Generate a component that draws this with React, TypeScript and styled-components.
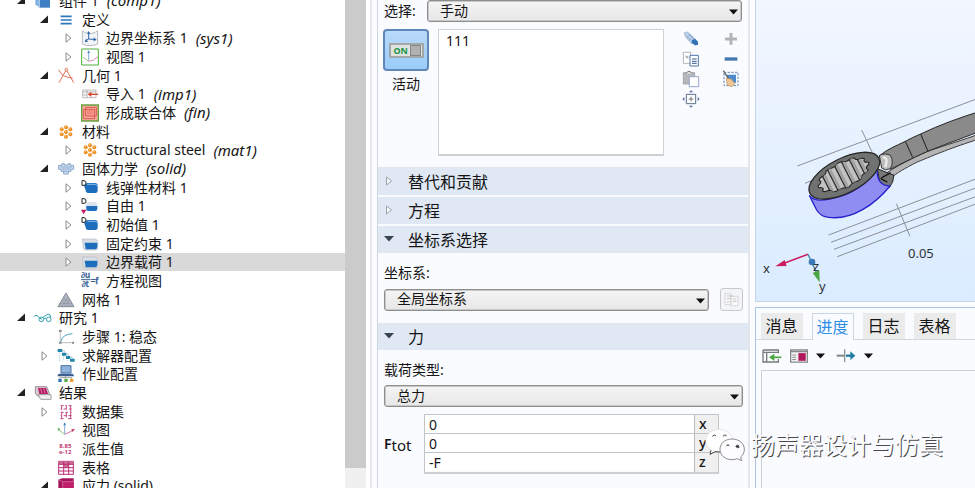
import React from "react";
import styled, { createGlobalStyle, css } from "styled-components";

const GlobalStyle = createGlobalStyle`
  * { box-sizing: border-box; }
  html, body { margin: 0; padding: 0; }
  body {
    font-family: "Noto Sans", "Noto Sans CJK SC", sans-serif;
    font-size: 14px;
    color: #151515;
    background: #fcfcff;
    overflow: hidden;
  }
  button, input, select, textarea { font: inherit; color: inherit; margin: 0; }
`;

const Workspace = styled.div`
  position: relative;
  display: grid;
  grid-template-columns: 370fr 385fr 220fr;
  height: 100vh;
  overflow: hidden;
`;

/* ---------- model tree ---------- */

const TreePane = styled.nav`
  display: flex;
  min-width: 0;
  overflow: hidden;
  background: #fff;
`;

const TreeList = styled.ul`
  flex: 1;
  min-width: 0;
  list-style: none;
  margin: -9px 0 0;
  padding: 0;
`;

const TreeRow = styled.li<{ $level: number; $selected?: boolean }>`
  display: flex;
  align-items: center;
  height: 19px;
  padding-left: ${(p) => [16, 39, 63][p.$level]}px;
  background: ${(p) => (p.$selected ? "#d9d9d9" : "transparent")};
  white-space: nowrap;
  line-height: 18px;
  &:nth-child(3n) { height: 18px; }
`;

const Expander = styled.button`
  display: flex;
  width: 10px;
  height: 12px;
  margin-right: 8px;
  padding: 0;
  border: 0;
  background: none;
`;

const NodeIcon = styled.svg`
  flex: none;
  width: 18px;
  height: 18px;
  margin-right: 7px;
`;

const Tag = styled.i`
  margin-left: 8px;
  font-size: 15px;
  line-height: 16px;
  padding-bottom: 1px;
`;

const ScrollTrack = styled.div`
  width: 21px;
  margin-right: 4px;
  background: #f0f0f0;
`;

const ScrollThumb = styled.div`
  height: 96%;
  background: #cbcbcb;
`;

type IconName =
  | "component" | "lines" | "coords" | "view" | "geometry" | "import" | "union"
  | "material" | "solid" | "domainD" | "free" | "boundary" | "equation" | "mesh"
  | "study" | "step" | "solver" | "job" | "results" | "dataset" | "axes"
  | "derived" | "table" | "stress";

const dots = [[27, 13], [14, 19], [40, 19], [27, 27], [14, 34], [40, 34], [27, 41]];

const icons: Record<IconName, React.ReactNode> = {
  component: (
    <>
      <path d="M4 12l10-6h34v38H14L4 38z" fill="#7fb2e3" />
      <path d="M15 13h33v34H15z" fill="#3f7fc4" />
      <path d="M16 13v34" stroke="#b9d6f0" strokeWidth="3" />
    </>
  ),
  lines: <path d="M11 16h33M11 27h33M11 38h33" stroke="#2f78be" strokeWidth="5" />,
  coords: (
    <>
      <path d="M4 6q4 0 7 5 16 6 31 0 3-5 8-5v39q-23 10-46 0z" fill="#f1f3f6" stroke="#b4b8be" strokeWidth="3" />
      <path d="M23 10v20l-9 5M23 30l21 2" fill="none" stroke="#2e67a8" strokeWidth="3" />
      <path d="M18 14l5-8 5 8zM38 25l9 7-9 5zM15 29l-4 10 10-1z" fill="#2e67a8" />
    </>
  ),
  view: (
    <>
      <path d="M2 3h50v48H2z" fill="#fff" stroke="#50ae3c" strokeWidth="3" />
      <path d="M23 38V10" stroke="#4b83c0" strokeWidth="2" />
      <path d="M19 15l4-8 4 8z" fill="#4b83c0" />
      <path d="M23 40L6 27" stroke="#5fae4f" strokeWidth="2" />
      <path d="M23 40q14 0 28-14" fill="none" stroke="#d0568f" strokeWidth="2" />
    </>
  ),
  geometry: (
    <g fill="none" stroke="#dd7257" strokeWidth="3">
      <path d="M5 8q10 24 42 25M27 10L6 47M29 10l21 37" />
      <circle cx="28" cy="8" r="4" fill="#fff" />
    </g>
  ),
  import: (
    <>
      <path d="M5 15h40v23H5zM5 21h40M18 15v23M5 30h13" fill="#fafafa" stroke="#9f9f9f" strokeWidth="2" />
      <path d="M27 28h24" stroke="#d8452c" strokeWidth="4" />
      <path d="M31 20v16l-11-8z" fill="#d8452c" />
    </>
  ),
  union: (
    <>
      <path d="M2 3h50v48H2z" fill="#f6aba0" stroke="#69a042" strokeWidth="4" />
      <path d="M8 16h33v28H8zM14 10h32v26H14z" fill="#f9aba0" stroke="#d8594a" strokeWidth="3" />
      <path d="M18 18h19v14H18z" fill="#f08a7c" />
    </>
  ),
  material: (
    <>
      {dots.map(([x, y]) => (
        <g key={`${x}-${y}`}>
          <circle cx={x} cy={y} r="6" fill="#ee8f22" />
          <circle cx={x - 1} cy={y - 2} r="2" fill="#fbd293" />
        </g>
      ))}
    </>
  ),
  solid: (
    <>
      <path d="M15 11h7v4h11v-4h7v5h10v12h-8v6h-8v8H20v-8h-8v-6H5V16h10z" fill="#cbdcf0" stroke="#8ba8cc" strokeWidth="3" />
      <path d="M10 21h35M14 27h27M18 34h19" stroke="#7395c0" strokeWidth="2" />
    </>
  ),
  domainD: (
    <>
      <path d="M9 20l9-8h24q8 0 8 8v14q0 8-7 8H22q-8 0-8-8z" fill="#1d6fbe" />
      <path d="M19 16h22q6 0 8 6" fill="none" stroke="#8dbbe6" strokeWidth="3" />
      <path d="M3 5h6q6 0 6 7t-6 7H3z" fill="#fff" stroke="#222" strokeWidth="3" />
    </>
  ),
  free: (
    <>
      <path d="M13 15h28q8 0 8 8v12q0 7-7 7H20q-7 0-7-7z" fill="#dce4ed" />
      <path d="M16 27h33v8q0 7-7 7H22q-6 0-6-7z" fill="#1d6fbe" />
      <path d="M3 5h6q6 0 6 7t-6 7H3z" fill="#fff" stroke="#222" strokeWidth="3" />
      <path d="M0 38h16l-8 14z" fill="#c7195f" />
    </>
  ),
  boundary: (
    <>
      <path d="M4 12h36q10 0 10 10v18q0 5-6 5H14q-6 0-7-6z" fill="#d9dee5" stroke="#b6bdc7" strokeWidth="2" />
      <path d="M11 23h38v12q-1 8-8 8H14z" fill="#1d6fbe" />
    </>
  ),
  equation: (
    <g fill="#365f96" stroke="#365f96" fontFamily="Noto Sans" fontSize="24" fontWeight="600">
      <text x="0" y="19">∂u</text>
      <text x="2" y="45">∂t</text>
      <text x="29" y="35">=f</text>
      <path d="M0 23h28" strokeWidth="3" />
    </g>
  ),
  mesh: (
    <>
      <path d="M27 6L51 47H3z" fill="#b4bac6" stroke="#858b96" strokeWidth="3" />
      <path d="M21 17l18 30M15 27l12 20M33 17L15 47M39 27L27 47M9 37l6 10M45 37l-6 10M15 27h24M9 37h36" stroke="#858b96" strokeWidth="1.5" />
    </>
  ),
  study: (
    <g fill="none" stroke="#35a3b5" strokeWidth="3">
      <path d="M0 22q6-7 12 0t12 9" />
      <circle cx="22" cy="31" r="7" />
      <circle cx="44" cy="31" r="7" />
      <path d="M29 30q5-6 8 0M27 25L42 15q8 0 8 10" />
    </g>
  ),
  step: (
    <>
      <path d="M10 6v38h42M6 12l4-7 4 7" fill="none" stroke="#9b9b9b" strokeWidth="2" />
      <path d="M12 40q4-21 34-23" fill="none" stroke="#43a7c3" strokeWidth="3" />
      <path d="M6 6h8v5H6zM6 41h8v6H6zM45 41h6v6h-6z" fill="#8a8a8a" />
    </>
  ),
  solver: (
    <>
      <path d="M2 6h14v9H2zM15 17h13v9H15zM27 27h13v9H27zM39 35h14v9H39z" fill="#2285aa" />
      <path d="M8 17v26M20 28v15M32 38v6" fill="none" stroke="#89bccb" strokeWidth="2" strokeDasharray="4 3" />
      <path d="M16 11h6v6M28 21h6v6M40 31h6v4" fill="none" stroke="#89bccb" strokeWidth="2" />
    </>
  ),
  job: (
    <>
      <path d="M12 2h30v22H12z" fill="#8fb2da" stroke="#4a70a4" strokeWidth="3" />
      <path d="M5 26h42l5 8H1z" fill="#3b5f92" />
      <path d="M25 34v7M8 42v-4h36v4" fill="none" stroke="#777" strokeWidth="2" />
      <path d="M4 42h10v9H4z" fill="#3175bc" />
      <path d="M22 42h10v9H22z" fill="#55a946" />
      <path d="M39 42h10v9H39z" fill="#f1a02b" />
    </>
  ),
  results: (
    <>
      <path d="M4 8h34l8 20v9H12L4 28z" fill="#d9cad2" stroke="#9e8c96" strokeWidth="3" />
      <path d="M12 12h24l6 18H16z" fill="#b51d64" />
      <path d="M12 32h39v14H20z" fill="#efefef" stroke="#9e9e9e" strokeWidth="3" />
      <path d="M20 13l4 15M29 13l4 15" stroke="#e4a1c0" strokeWidth="2" />
    </>
  ),
  dataset: (
    <path d="M11 8h9M25 8h4M34 8h10M11 18h4M20 18h10M36 18h8M11 28h9M25 28h8M39 28h5M11 38h4M20 38h9M34 38h10M14 8v12M28 8v10M41 9v18M14 28v18M28 29v14M41 30v16M10 47h10M33 47h11" stroke="#c54883" strokeWidth="3" />
  ),
  axes: (
    <>
      <path d="M23 39V8" stroke="#4485c2" strokeWidth="2" />
      <path d="M23 40L5 26" stroke="#56ac4a" strokeWidth="2" />
      <path d="M23 40l26-12" stroke="#c2326f" strokeWidth="2" />
      <path d="M19 13l4-9 4 9z" fill="#4485c2" />
      <path d="M1 21l9 2-5 7z" fill="#56ac4a" />
      <path d="M43 25l11-1-8 9z" fill="#c2326f" />
    </>
  ),
  derived: (
    <g fill="#c03a78" fontFamily="Noto Sans" fontSize="18" fontWeight="700">
      <text x="7" y="24">8.85</text>
      <text x="6" y="43">e-12</text>
    </g>
  ),
  table: (
    <>
      <path d="M5 7h44v39H5z" fill="#fff" stroke="#bd2d70" strokeWidth="3" />
      <path d="M5 7h44v9H5zM20 16h15v10H20z" fill="#c96d97" />
      <path d="M5 16h44M5 26h44M5 36h44M20 7v39M35 7v39" stroke="#bd2d70" strokeWidth="3" />
    </>
  ),
  stress: (
    <>
      <path d="M4 8l12-4h34v44H16L4 40z" fill="#a5155a" />
      <path d="M17 14h33v34H17z" fill="#c01f6b" />
      <path d="M4 8l13 6v34M17 14h32" fill="none" stroke="#e17fae" strokeWidth="2" />
    </>
  ),
};

interface TreeNode {
  level: 0 | 1 | 2;
  icon: IconName;
  label: string;
  tag?: string;
  state?: "open" | "closed";
  selected?: boolean;
}

const nodes: TreeNode[] = [
  { level: 0, icon: "component", label: "组件 1", tag: "(comp1)", state: "open" },
  { level: 1, icon: "lines", label: "定义", state: "open" },
  { level: 2, icon: "coords", label: "边界坐标系 1", tag: "(sys1)", state: "closed" },
  { level: 2, icon: "view", label: "视图 1", state: "closed" },
  { level: 1, icon: "geometry", label: "几何 1", state: "open" },
  { level: 2, icon: "import", label: "导入 1", tag: "(imp1)" },
  { level: 2, icon: "union", label: "形成联合体", tag: "(fin)" },
  { level: 1, icon: "material", label: "材料", state: "open" },
  { level: 2, icon: "material", label: "Structural steel", tag: "(mat1)", state: "closed" },
  { level: 1, icon: "solid", label: "固体力学", tag: "(solid)", state: "open" },
  { level: 2, icon: "domainD", label: "线弹性材料 1", state: "closed" },
  { level: 2, icon: "free", label: "自由 1", state: "closed" },
  { level: 2, icon: "domainD", label: "初始值 1", state: "closed" },
  { level: 2, icon: "boundary", label: "固定约束 1", state: "closed" },
  { level: 2, icon: "boundary", label: "边界载荷 1", state: "closed", selected: true },
  { level: 2, icon: "equation", label: "方程视图" },
  { level: 1, icon: "mesh", label: "网格 1" },
  { level: 0, icon: "study", label: "研究 1", state: "open" },
  { level: 1, icon: "step", label: "步骤 1: 稳态" },
  { level: 1, icon: "solver", label: "求解器配置", state: "closed" },
  { level: 1, icon: "job", label: "作业配置" },
  { level: 0, icon: "results", label: "结果", state: "open" },
  { level: 1, icon: "dataset", label: "数据集", state: "closed" },
  { level: 1, icon: "axes", label: "视图" },
  { level: 1, icon: "derived", label: "派生值" },
  { level: 1, icon: "table", label: "表格" },
  { level: 1, icon: "stress", label: "应力 (solid)", state: "open" },
];

function TreeItem({ node }: { node: TreeNode }) {
  return (
    <TreeRow $level={node.level} $selected={node.selected}>
      <Expander aria-label={node.label} tabIndex={node.state ? 0 : -1}>
        <svg width="10" height="12" viewBox="0 0 10 12">
          {node.state === "open" && <path d="M9 1.500v7.500H1z" fill="#222" />}
          {node.state === "closed" && (
            <path d="M3 1.800L8 6 3 10.200z" fill="#fff" stroke="#8a8a8a" />
          )}
        </svg>
      </Expander>
      <NodeIcon viewBox="0 0 54 54">{icons[node.icon]}</NodeIcon>
      <span>{node.label}</span>
      {node.tag && <Tag>{node.tag}</Tag>}
    </TreeRow>
  );
}

/* ---------- settings ---------- */

const SettingsPane = styled.main`
  display: flex;
  min-width: 0;
  padding: 0 5px;
  border-left: 2px solid #e6e8f0;
  background: #fcfcff;
`;

const SettingsBody = styled.div`
  flex: 1;
  min-width: 0;
  border-left: 1px solid #ccd6e4;
  border-right: 2px solid #e3e5ee;
  background: #fafbff;
`;

const SelectionArea = styled.section`
  padding: 0 6px 11px 5px;
  border-bottom: 1px solid #e1e7f1;
`;

const SelectionHead = styled.div`
  display: flex;
  align-items: center;
  margin-bottom: 7px;
`;

const SelectionLabel = styled.label`
  width: 44px;
  padding: 0 0 2px 1px;
`;

const SelectionBody = styled.div`
  display: flex;
`;

const ToggleBox = styled.div`
  display: flex;
  flex-direction: column;
  align-items: center;
  gap: 2px;
  width: 46px;
  margin-right: 9px;
`;

const ToggleButton = styled.button`
  display: grid;
  place-items: center;
  width: 46px;
  height: 42px;
  padding: 0;
  border: 2px solid #5f87b8;
  border-radius: 4px;
  background: linear-gradient(#b9d9f8, #9accf9);
`;

const Switch = styled.span`
  display: flex;
  align-items: center;
  justify-content: space-between;
  width: 35px;
  height: 15px;
  padding: 0 1px 0 3px;
  border: 2px solid #a2a6a9;
  background: #dfe3e2;
  color: #1d9447;
  font-size: 9px;
  font-weight: 700;
`;

const Knob = styled.span`
  width: 11px;
  height: 11px;
  border: 1px solid #858585;
  background: #b0b0b0;
`;

const SelectionList = styled.textarea`
  flex: 1;
  min-width: 0;
  height: 127px;
  padding: 1px 7px;
  border: 1px solid #cfd2d6;
  border-bottom: 2px solid #cfd0d2;
  outline: 0;
  resize: none;
  background: #fff;
  line-height: 19px;
`;

const Tools = styled.div`
  display: grid;
  grid-template-columns: 18px 18px;
  grid-auto-rows: 18px;
  gap: 2px 22px;
  margin: 1px 2px 0 18px;
`;

const ToolButton = styled.button`
  display: flex;
  align-items: center;
  justify-content: center;
  padding: 0;
  border: 0;
  background: none;
`;

const SelectFrame = styled.div`
  position: relative;
  flex: 1;
  min-width: 0;
  svg {
    position: absolute;
    right: 4px;
    top: 9px;
    pointer-events: none;
  }
`;

const SelectControl = styled.select`
  display: block;
  width: 100%;
  height: 22px;
  padding: 0 20px 1px 12px;
  appearance: none;
  border: 1px solid #8e8e8e;
  border-radius: 3px;
  outline: 0;
  background: linear-gradient(#f4f4f4, #e7e7e7);
  box-shadow: inset 0 0 0 1px #c9c9c9;
  line-height: 18px;
`;

const SectionTitle = styled.h2<{ $gap?: boolean }>`
  margin: 0 0 ${(p) => (p.$gap ? 2 : 0)}px;
  background: #dfe8f3;
  font-size: 16px;
  font-weight: 400;
  button {
    display: flex;
    align-items: center;
    gap: 14px;
    width: 100%;
    height: 27px;
    padding: 0 6px 1px;
    border: 0;
    background: none;
  }
`;

const SectionContent = styled.div`
  padding: 10px 5px 12px 6px;
`;

const FieldLabel = styled.label`
  display: block;
  height: 20px;
  margin-bottom: 5px;
  line-height: 20px;
`;

const FieldRow = styled.div`
  display: flex;
  align-items: center;
`;

const GhostButton = styled.button`
  display: grid;
  place-items: center;
  width: 23px;
  height: 23px;
  margin-left: 11px;
  padding: 0;
  border: 1px solid #c6c8cc;
  border-radius: 3px;
  background: #f3f4f6;
`;

const VectorRow = styled.div`
  display: flex;
  align-items: center;
  margin: 7px 24px 0 0;
`;

const VectorName = styled.span`
  width: 40px;
  font-size: 14px;
  font-weight: 600;
  line-height: 20px;
  sub { font-size: 15px; font-weight: 400; vertical-align: -2px; }
`;

const VectorTable = styled.table`
  flex: 1;
  display: grid;
  border: 1px solid #c2c4c8;
  border-bottom: 2px solid #cdcfd3;
  tbody, tr { display: grid; }
  tr { grid-template-columns: 1fr 24px; height: 19px; border-bottom: 1px solid #c2c4c8; }
  tr:last-child { border-bottom: 0; }
  td, th { padding: 0; }
  th {
    padding-left: 4px;
    border-left: 1px solid #b9b9b9;
    background: #f0f0f0;
    font-weight: 500;
    line-height: 18px;
    text-align: left;
  }
`;

const VectorInput = styled.input`
  display: block;
  width: 100%;
  height: 18px;
  padding: 0 4px;
  border: 0;
  outline: 0;
  background: #fff;
`;

function Caret() {
  return (
    <svg width="9" height="6" viewBox="0 0 9 6">
      <path d="M0 .5h9L4.500 5.500z" fill="#111" />
    </svg>
  );
}

function Dropdown({ id, value }: { id: string; value: string }) {
  return (
    <SelectFrame>
      <SelectControl id={id} defaultValue={value}>
        <option>{value}</option>
      </SelectControl>
      <Caret />
    </SelectFrame>
  );
}

function Section({ title, open, gap }: { title: string; open?: boolean; gap?: boolean }) {
  return (
    <SectionTitle $gap={gap}>
      <button aria-expanded={!!open}>
        <svg width="10" height="10" viewBox="0 0 10 10">
          {open ? (
            <path d="M0 2h10L5 7.500z" fill="#3a4350" />
          ) : (
            <path d="M2.500 1l5 4-5 4z" fill="#fafbff" stroke="#9aa2ac" />
          )}
        </svg>
        {title}
      </button>
    </SectionTitle>
  );
}

const toolIcons: [string, React.ReactNode][] = [
  ["创建选择", (
    <>
      <path d="M7 8l10-2 24 22-12 14L10 20z" fill="#c4d6ea" stroke="#92aac8" strokeWidth="2" />
      <path d="M10 14l20 20M16 9l20 18M14 24l12-12M21 31l12-13" stroke="#7d9cc4" strokeWidth="2" />
      <path d="M30 29l10-2 8 8v10l-10 1-9-8z" fill="#3173b5" />
    </>
  )],
  ["添加", <path d="M27 9v35M9 27h36" stroke="#b1b3b6" strokeWidth="9" />],
  ["复制", (
    <>
      <path d="M4 7h22v33H4z" fill="#fff" stroke="#8b9098" strokeWidth="2" />
      <path d="M10 21h10M12 16l6 10" stroke="#777" strokeWidth="2" />
      <path d="M24 16h25v32H24z" fill="#fff" stroke="#4f74a7" strokeWidth="3" />
      <path d="M30 27h14M30 34h14M30 40h14" stroke="#355b91" strokeWidth="3" />
    </>
  )],
  ["移除", <path d="M8 27h38" stroke="#4476af" strokeWidth="10" />],
  ["粘贴", (
    <>
      <path d="M4 8h34v34H4z" fill="#b6b8ba" stroke="#8d8f91" strokeWidth="2" />
      <path d="M11 11q10-14 20 0" fill="#ddd" stroke="#777" strokeWidth="3" />
      <path d="M22 20h28v30H22z" fill="#fff" stroke="#96a5cc" strokeWidth="3" />
    </>
  )],
  ["清除选择", (
    <>
      <path d="M6 7h42v40H6z" fill="none" stroke="#5c87bb" strokeWidth="3" strokeDasharray="7 4" />
      <path d="M14 14h28v24H20z" fill="#4e8bca" />
      <path d="M4 2l17 27" stroke="#666" strokeWidth="4" />
      <path d="M13 25l14 2 12 14-9 9-14-5z" fill="#f0c794" stroke="#b58b5c" strokeWidth="2" />
    </>
  )],
  ["缩放到选择", (
    <>
      <path d="M13 13h28v28H13z" fill="#fff" stroke="#5c6f88" strokeWidth="3" />
      <path d="M27 20v14M20 27h14" stroke="#777" strokeWidth="3" />
      <path d="M21 7l6-6 6 6zM21 47l6 6 6-6zM7 21l-6 6 6 6zM47 21l6 6-6 6z" fill="#4d6e98" />
    </>
  )],
];

/* ---------- graphics and messages ---------- */

const RightPane = styled.aside`
  display: flex;
  flex-direction: column;
  min-width: 0;
  gap: 5px;
`;

const Canvas = styled.div`
  height: 302px;
  overflow: hidden;
  border-left: 1px solid #c6d5e8;
  border-bottom: 1px solid #c6d5e8;
  background: linear-gradient(#f2f6ff, #daecff);
  svg { display: block; width: 100%; height: 100%; }
`;

const InfoPanel = styled.section`
  display: flex;
  flex: 1;
  flex-direction: column;
  border-left: 1px solid #a9c6e4;
  border-top: 1px solid #a9c6e4;
  background: #fafbff;
`;

const Tabs = styled.div`
  display: flex;
  gap: 9px;
  height: 32px;
  padding: 5px 0 0 5px;
  border-bottom: 1px solid #d3d6dc;
`;

const Tab = styled.button<{ $active?: boolean }>`
  width: 42px;
  height: 26px;
  padding: 0 1px 0 0;
  border: 0;
  background: #ebebec;
  font-size: 16px;
  line-height: 26px;
  white-space: nowrap;
  ${(p) =>
    p.$active &&
    css`
      height: 27px;
      border: 1px solid #c9d6e6;
      border-bottom: 0;
      background: #fafbff;
      color: #2d8fe6;
    `}
`;

const ToolRow = styled.div`
  display: flex;
  align-items: center;
  gap: 8px;
  height: 30px;
  padding: 2px 0 0 6px;
`;

const Output = styled.div`
  flex: 1;
  margin-left: 5px;
  border: 1px solid #cdd1d7;
  border-width: 1px 0 0 1px;
`;

const Watermark = styled.div`
  position: absolute;
  right: 32px;
  bottom: 24px;
  display: flex;
  align-items: center;
  gap: 6px;
  color: #fbfcff;
  font-size: 24px;
  line-height: 38px;
  text-shadow: 1px 1px 0 #4a4a4a;
  white-space: nowrap;
  pointer-events: none;
`;

/* Twelve-point profile of the ring spanner's opening. */
const boreOutline = Array.from({ length: 48 }, (_, i) => {
  const a = (i / 48) * Math.PI * 2;
  const k = i % 4 < 2 ? 1 : 0.9;
  return `${(84 * k * Math.cos(a)).toFixed(1)},${(39 * k * Math.sin(a)).toFixed(1)}`;
}).join(" ");

const flutes = [-58, -36, -12, 12, 36, 58];

function Scene() {
  return (
    <svg viewBox="0 0 219 301" preserveAspectRatio="xMinYMin slice">
      <defs>
        <clipPath id="bore">
          <polygon points={boreOutline} />
        </clipPath>
      </defs>
      <g transform="translate(-6 80) scale(.33333)">
        <path
          d="M142 258L690 53M165 310l50-20M335 150l32 68M236 465l454-173M243 487l447-168M252 508l438-163M262 530l428-163M439 371l41 98"
          fill="none" stroke="#8b9096" strokeWidth="3"
        />
        <path d="M392 290C440 258 490 232 530 215 590 194 640 180 690 161v15C600 205 560 222 500 247c-36 18-60 33-78 47l-28 8z" fill="#b4b4b4" stroke="#3b3b3b" strokeWidth="3" />
        <path d="M388 228C410 208 440 197 466 184q22-12 46-22C570 134 630 113 690 94v60C620 181 580 195 533 214c-52 23-80 38-112 54z" fill="#8a8a8a" stroke="#252525" strokeWidth="3" />
        <path d="M466 184l22 48M512 162l22 52" stroke="#1e1e1e" strokeWidth="3" />
        <path d="M382 266l50 20q-2 24-14 36l-28-12z" fill="#777" stroke="#222" strokeWidth="3" />
        <path d="M388 226q20-8 33 0 12 20 0 40-16 8-26-2z" fill="#bdbdbd" stroke="#333" strokeWidth="3" />
        <path d="M398 232q12 0 12 12l-4 18" fill="none" stroke="#ececec" strokeWidth="7" />
        <path d="M178 346l22 44q12 20 36 22c70 10 140-40 184-94q-42-2-38-52-50 75-144 91-45 10-60-11z" fill="#8f8df2" stroke="#2622cb" strokeWidth="4" />
        <g transform="translate(283 287) rotate(-27)">
          <ellipse rx="116" ry="52" fill="#707272" stroke="#262626" strokeWidth="4" />
          <g transform="translate(-1 -3)">
            <polygon points={boreOutline} fill="#c2c2c2" stroke="#1f1f1f" strokeWidth="3" />
            <g clipPath="url(#bore)">
              {flutes.map((x) => (
                <g key={x}>
                  <path d={`M${x + 7} -44v88`} stroke="#a0a0a0" strokeWidth="7" />
                  <path d={`M${x} -44v88`} stroke="#2e2e2e" strokeWidth="4" />
                </g>
              ))}
            </g>
          </g>
        </g>
        <path d="M394 294l28-16M392 296l20 10" stroke="#111" strokeWidth="4" />
        <path d="M174 523l-76 28" stroke="#cd1d61" strokeWidth="5" />
        <path d="M76 559l28-19 6 18z" fill="#cd1d61" />
        <path d="M174 523l26 56" stroke="#3e84aa" strokeWidth="4" />
        <circle cx="186" cy="546" r="10" fill="#3b79b8" />
        <path d="M188 579l20-8 1 36z" fill="#49a641" />
      </g>
      <g fill="#2d3035" fontSize="13" fontFamily="Noto Sans">
        <text x="152" y="258">0.05</text>
        <text x="7" y="273">x</text>
        <text x="57" y="271">z</text>
        <text x="63" y="291">y</text>
      </g>
    </svg>
  );
}

export default function App() {
  return (
    <>
      <GlobalStyle />
      <Workspace>
        <TreePane>
          <TreeList>
            {nodes.map((n, i) => (
              <TreeItem key={i} node={n} />
            ))}
          </TreeList>
          <ScrollTrack>
            <ScrollThumb />
          </ScrollTrack>
        </TreePane>

        <SettingsPane>
          <SettingsBody>
            <SelectionArea>
              <SelectionHead>
                <SelectionLabel htmlFor="selection">选择:</SelectionLabel>
                <Dropdown id="selection" value="手动" />
              </SelectionHead>
              <SelectionBody>
                <ToggleBox>
                  <ToggleButton id="active" aria-pressed="true">
                    <Switch>
                      ON
                      <Knob />
                    </Switch>
                  </ToggleButton>
                  <label htmlFor="active">活动</label>
                </ToggleBox>
                <SelectionList aria-label="选择" defaultValue="111" />
                <Tools>
                  {toolIcons.map(([name, art]) => (
                    <ToolButton key={name} aria-label={name}>
                      <svg width="18" height="18" viewBox="0 0 54 54">{art}</svg>
                    </ToolButton>
                  ))}
                </Tools>
              </SelectionBody>
            </SelectionArea>

            <Section title="替代和贡献" gap />
            <Section title="方程" gap />
            <Section title="坐标系选择" open />
            <SectionContent>
              <FieldLabel htmlFor="coords">坐标系:</FieldLabel>
              <FieldRow>
                <Dropdown id="coords" value="全局坐标系" />
                <GhostButton aria-label="转到源">
                  <svg width="15" height="15" viewBox="0 0 45 45">
                    <path d="M3 5h17v33H3zM21 13h21v28H21z" fill="#fafafa" stroke="#c8c8c8" strokeWidth="2" />
                    <path d="M8 12h20M8 20h10M26 21h11M26 28h11M8 30h8" stroke="#c4c4c4" strokeWidth="3" />
                  </svg>
                </GhostButton>
              </FieldRow>
            </SectionContent>

            <Section title="力" open />
            <SectionContent>
              <FieldLabel htmlFor="loadtype">载荷类型:</FieldLabel>
              <Dropdown id="loadtype" value="总力" />
              <VectorRow>
                <VectorName>
                  F<sub>tot</sub>
                </VectorName>
                <VectorTable>
                  <tbody>
                    {[["0", "x"], ["0", "y"], ["-F", "z"]].map(([v, axis]) => (
                      <tr key={axis}>
                        <td>
                          <VectorInput aria-label={axis} defaultValue={v} />
                        </td>
                        <th scope="row">{axis}</th>
                      </tr>
                    ))}
                  </tbody>
                </VectorTable>
              </VectorRow>
            </SectionContent>
          </SettingsBody>
        </SettingsPane>

        <RightPane>
          <Canvas>
            <Scene />
          </Canvas>
          <InfoPanel>
            <Tabs role="tablist">
              <Tab role="tab">消息</Tab>
              <Tab role="tab" $active aria-selected="true">进度</Tab>
              <Tab role="tab">日志</Tab>
              <Tab role="tab">表格</Tab>
            </Tabs>
            <ToolRow>
              <ToolButton aria-label="停靠">
                <svg width="20" height="16" viewBox="0 0 60 48">
                  <path d="M3 6h46v10M3 6v36h46v-9M3 13h46M14 13v29" fill="none" stroke="#777b7b" strokeWidth="4" />
                  <path d="M34 28h24" stroke="#4ba642" strokeWidth="5" />
                  <path d="M37 17v22L21 28z" fill="#4ba642" />
                </svg>
              </ToolButton>
              <ToolButton aria-label="布局">
                <svg width="18" height="16" viewBox="0 0 56 48">
                  <path d="M2 5h52v38H2z" fill="#f4f4f4" stroke="#85898b" strokeWidth="4" />
                  <path d="M2 10h52" stroke="#85898b" strokeWidth="5" />
                  <path d="M7 21h12M7 28h12M7 35h12" stroke="#888" strokeWidth="3" />
                  <path d="M26 15h23v24H26z" fill="#b1195f" />
                </svg>
              </ToolButton>
              <ToolButton aria-label="布局选项"><Caret /></ToolButton>
              <ToolButton aria-label="继续">
                <svg width="23" height="16" viewBox="0 0 69 48">
                  <path d="M11 23h22" stroke="#858585" strokeWidth="6" />
                  <path d="M35 4v39" stroke="#86979e" strokeWidth="4" />
                  <path d="M39 23h18" stroke="#207ca5" strokeWidth="7" />
                  <path d="M52 10v26l15-13z" fill="#207ca5" />
                </svg>
              </ToolButton>
              <ToolButton aria-label="继续选项"><Caret /></ToolButton>
            </ToolRow>
            <Output role="tabpanel" />
          </InfoPanel>
        </RightPane>

        <Watermark>
          <svg width="40" height="34" viewBox="0 0 120 102">
            <path d="M43 4C19 4 2 19 2 38c0 12 7 21 16 27l-3 14 16-8q10 3 20 1C72 70 84 56 83 38 82 18 64 4 43 4z" fill="#fff" stroke="#d7d9dd" strokeWidth="2" />
            <path d="M18 67l-3 12 16-8 14 1" fill="none" stroke="#444" strokeWidth="3" />
            <path d="M22 25q6-8 11-1M54 25q6-8 11-1" fill="none" stroke="#444" strokeWidth="3" />
            <path d="M81 33C60 33 45 46 45 64s16 31 36 31q9 0 16-3l13 6-3-11c7-5 11-14 11-23 0-18-16-31-37-31z" fill="#fdfdff" stroke="#555" strokeWidth="2" />
            <path d="M64 53q6-6 9 0M92 55q5-7 10-1v5q-7 2-10-4" fill="#444" stroke="#444" strokeWidth="2" />
          </svg>
          扬声器设计与仿真
        </Watermark>
      </Workspace>
    </>
  );
}
